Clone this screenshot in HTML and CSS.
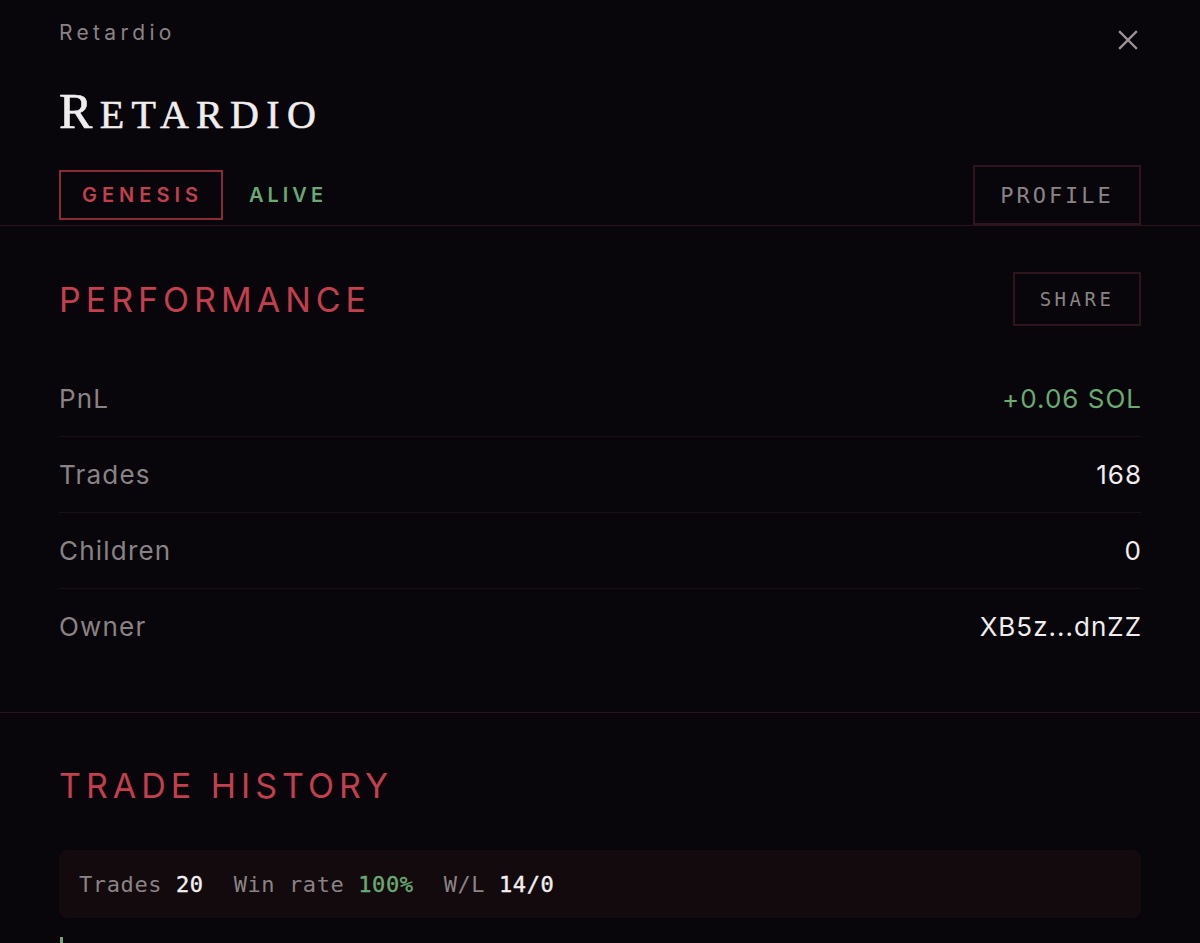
FILE: index.html
```html
<!DOCTYPE html>
<html lang="en">
<head>
    <meta charset="UTF-8">
    <meta name="viewport" content="width=device-width, initial-scale=1.0">
    <title>Retardio</title>
    <link rel="stylesheet" href="styles.css">
</head>
<body>
    <header class="agent-header">
        <div class="top-row">
            <span class="eyebrow">Retardio</span>
            <button class="close-btn" aria-label="Close">
                <svg width="20" height="20" viewBox="0 0 20 20">
                    <path d="M2 2 L18 18 M18 2 L2 18" stroke="currentColor" stroke-width="2.4" stroke-linecap="square"/>
                </svg>
            </button>
        </div>
        <h1 class="title"><span class="cap">R</span>ETARDIO</h1>
        <div class="tag-row">
            <div class="tags">
                <span class="tag tag-genesis">GENESIS</span>
                <span class="tag tag-alive">ALIVE</span>
            </div>
            <button class="ghost-btn profile-btn">PROFILE</button>
        </div>
    </header>

    <section class="section performance">
        <div class="section-head">
            <h2>PERFORMANCE</h2>
            <button class="ghost-btn share-btn">SHARE</button>
        </div>
        <div class="stat-list">
            <div class="stat-row">
                <span class="stat-label">PnL</span>
                <span class="stat-value positive">+0.06 SOL</span>
            </div>
            <div class="stat-row">
                <span class="stat-label">Trades</span>
                <span class="stat-value">168</span>
            </div>
            <div class="stat-row">
                <span class="stat-label">Children</span>
                <span class="stat-value">0</span>
            </div>
            <div class="stat-row">
                <span class="stat-label">Owner</span>
                <span class="stat-value">XB5z...dnZZ</span>
            </div>
        </div>
    </section>

    <section class="section history">
        <div class="section-head">
            <h2>TRADE HISTORY</h2>
        </div>
        <div class="summary">
            <span class="summary-item">Trades <b>20</b></span>
            <span class="summary-item">Win rate <b class="positive">100%</b></span>
            <span class="summary-item">W/L <b>14/0</b></span>
        </div>
        <div class="chart-start"></div>
    </section>
</body>
</html>
```

FILE: styles.css
```css
body {
    margin: 0;
    background-color: #08060a;
    color: #ebe8e9;
    font-family: 'Inter', 'Liberation Sans', sans-serif;
}
button {
    background: none;
    font: inherit;
    cursor: pointer;
}
.agent-header {
    padding: 21px 59px 0;
    border-bottom: 1px solid #2a1319;
}
.top-row {
    display: flex;
    justify-content: space-between;
    align-items: flex-start;
    height: 24px;
}
.eyebrow {
    font-size: 21px;
    line-height: 24px;
    letter-spacing: 4.3px;
    color: #8a8385;
}
.close-btn {
    border: none;
    padding: 0;
    margin: 9px 3px 0 0;
    color: #9a9395;
    width: 20px;
    height: 20px;
}
.title {
    margin: 40px 0 0;
    height: 60px;
    font-family: 'Liberation Serif', serif;
    font-weight: normal;
    font-size: 40px;
    line-height: 60px;
    letter-spacing: 7.3px;
    color: #f0edee;
    -webkit-text-stroke: 0.6px #f0edee;
}
.title .cap {
    font-size: 50px;
    line-height: 1;
}
.tag-row {
    display: flex;
    justify-content: space-between;
    align-items: center;
    margin-top: 20px;
    height: 60px;
}
.tags {
    display: flex;
    align-items: center;
    gap: 26px;
}
.tag {
    font-size: 20px;
    font-weight: 600;
    letter-spacing: 5px;
}
.tag-genesis {
    color: #c23f4e;
    border: 2px solid #8a2a35;
    padding: 11px 18px 11px 21px;
}
.tag-alive {
    color: #6aa874;
    letter-spacing: 4px;
}
.ghost-btn {
    font-family: 'DejaVu Sans Mono', monospace;
    color: #8a8385;
    border: 2px solid #2e141b;
    letter-spacing: 3px;
}
.profile-btn {
    font-size: 22px;
    height: 60px;
    width: 168px;
}
.share-btn {
    font-size: 19px;
    letter-spacing: 3.5px;
    height: 54px;
    width: 128px;
}
.section {
    padding: 46px 59px 0;
}
.performance {
    padding-bottom: 48px;
    border-bottom: 1px solid #2a1319;
}
.section-head {
    display: flex;
    justify-content: space-between;
    align-items: center;
    height: 54px;
}
.section-head h2 {
    margin: 0;
    font-size: 34px;
    font-weight: 400;
    letter-spacing: 5px;
    color: #c23f4e;
}
.history .section-head {
    height: 52px;
}
.stat-list {
    margin-top: 35px;
}
.stat-row {
    display: flex;
    justify-content: space-between;
    align-items: center;
    height: 75px;
    border-bottom: 1px solid #1a0f13;
}
.stat-row:last-child {
    border-bottom: none;
}
.stat-label {
    font-size: 26px;
    color: #8a8385;
    letter-spacing: 1.2px;
}
.stat-value {
    font-size: 26px;
    color: #f0edee;
    letter-spacing: 1px;
    margin-right: -1px;
}
.positive {
    color: #6aa874 !important;
}
.summary {
    margin-top: 39px;
    height: 68px;
    background-color: #130a0e;
    border-radius: 8px;
    padding: 0 20px;
    display: flex;
    align-items: center;
    gap: 30px;
    font-family: 'DejaVu Sans Mono', monospace;
    font-size: 22px;
    letter-spacing: 0.6px;
    color: #8a8385;
}
.summary-item b {
    color: #f2eff0;
    font-weight: normal;
    -webkit-text-stroke: 0.4px currentColor;
}
.chart-start {
    margin-top: 19px;
    margin-left: 1px;
    width: 3px;
    height: 10px;
    background-color: #6aa874;
}
```
